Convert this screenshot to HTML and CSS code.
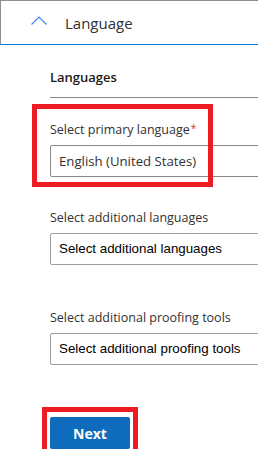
FILE: index.html
```html
<!DOCTYPE html>
<html lang="en">

<head>
    <meta charset="UTF-8">
    <title>Language</title>
    <link rel="stylesheet" href="styles.css">
</head>

<body>
    <div class="panel">
        <div class="panel-header">
            <svg class="chevron" width="16" height="9" viewBox="0 0 16 9">
                <path d="M0.5 8.5 L8 1 L15.5 8.5" fill="none" stroke="#3b82f6" stroke-width="1.1"/>
            </svg>
            <span class="panel-title">Language</span>
        </div>

        <div class="panel-body">
            <h2 class="section-title">Languages</h2>

            <div class="field marked">
                <label>Select primary language<span class="req">*</span></label>
                <div class="select primary">English (United States)</div>
                <div class="mark mark-field"></div>
            </div>

            <div class="field">
                <label>Select additional languages</label>
                <div class="select">Select additional languages</div>
            </div>

            <div class="field field-last">
                <label>Select additional proofing tools</label>
                <div class="select">Select additional proofing tools</div>
            </div>

            <div class="actions">
                <button type="button" class="btn-next">Next</button>
                <div class="mark mark-btn"></div>
            </div>
        </div>
    </div>
</body>

</html>
```

FILE: styles.css
```css
html, body {
    margin: 0;
    padding: 0;
    background-color: #ffffff;
    overflow: hidden;
}

body {
    font-family: "Open Sans", "Noto Sans", sans-serif;
    color: #242424;
    width: 258px;
    height: 454px;
}

.panel {
    width: 258px;
    overflow: hidden;
}

/* header of the collapsible */
.panel-header {
    display: flex;
    align-items: center;
    height: 43px;
    border-top: 1px solid #8f8f8f;
    border-left: 1px solid #8f8f8f;
    border-bottom: 1px solid #0078d4;
    box-sizing: content-box;
}

.chevron {
    margin-left: 30px;
    margin-top: -4px;
}

.panel-title {
    margin-left: 18px;
    font-size: 15px;
    color: #323130;
}

.panel-body {
    padding-left: 50px;
}

.section-title {
    margin: 23px 0 0;
    padding-bottom: 11px;
    font-size: 13px;
    font-weight: 600;
    color: #1b1a19;
    border-bottom: 1px solid #8a8886;
}

.field {
    position: relative;
    margin-top: 23px;
}

.field + .field {
    margin-top: 32px;
}

.field-last {
    margin-top: 44px !important;
}

.field label {
    display: block;
    font-size: 12.5px;
    color: #323130;
    margin-bottom: 7px;
}

.req {
    color: #d13438;
    font-size: 10px;
    vertical-align: top;
    margin-left: 1px;
}

.select {
    width: 240px;
    height: 30px;
    line-height: 30px;
    border: 1px solid #a19f9d;
    border-radius: 2px;
    padding-left: 8px;
    font-family: "Liberation Sans", Arial, sans-serif;
    font-size: 13.33px;
    color: #000000;
    white-space: nowrap;
}

.select.primary {
    font-family: "Open Sans", "Noto Sans", sans-serif;
    font-size: 13.2px;
    color: #323130;
    border-color: #8a8886;
}

.actions {
    position: relative;
    margin-top: 52px;
}

.btn-next {
    width: 80px;
    height: 32px;
    border: none;
    border-radius: 2px;
    background-color: #0f6cbd;
    color: #ffffff;
    font-family: "Open Sans", "Noto Sans", sans-serif;
    font-size: 14px;
    font-weight: 700;
    padding: 0;
}

/* red annotation boxes */
.mark {
    position: absolute;
    border: 5px solid #ed1c24;
    box-sizing: border-box;
}

.mark-field {
    left: -18px;
    top: -17px;
    width: 181px;
    height: 83px;
}

.mark-btn {
    left: -8px;
    top: -10px;
    width: 96px;
    height: 48px;
}
```
